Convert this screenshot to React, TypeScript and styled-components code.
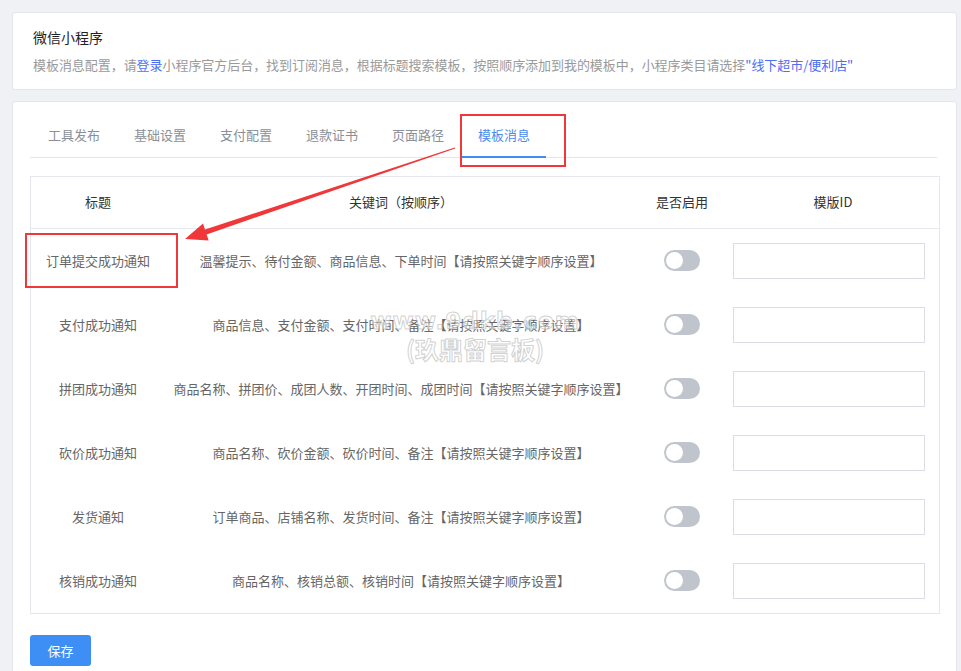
import React from 'react'
import styled, { createGlobalStyle } from 'styled-components'

const GlobalStyle = createGlobalStyle`
  html, body {
    margin: 0;
    padding: 0;
    background: #f0f1f5;
    font-family: "Noto Sans CJK SC", "Liberation Sans", sans-serif;
  }
  * { box-sizing: border-box; }
`

const tabs = ['工具发布', '基础设置', '支付配置', '退款证书', '页面路径', '模板消息']

const rows = [
  { title: '订单提交成功通知', keys: '温馨提示、待付金额、商品信息、下单时间' },
  { title: '支付成功通知', keys: '商品信息、支付金额、支付时间、备注' },
  { title: '拼团成功通知', keys: '商品名称、拼团价、成团人数、开团时间、成团时间' },
  { title: '砍价成功通知', keys: '商品名称、砍价金额、砍价时间、备注' },
  { title: '发货通知', keys: '订单商品、店铺名称、发货时间、备注' },
  { title: '核销成功通知', keys: '商品名称、核销总额、核销时间' },
]

export default function App() {
  return (
    <>
      <GlobalStyle />
      <Page>
        <Card>
          <CardTitle>微信小程序</CardTitle>
          <Hint>
            模板消息配置，请<HintLink>登录</HintLink>
            小程序官方后台，找到订阅消息，根据标题搜索模板，按照顺序添加到我的模板中，小程序类目请选择
            <HintLink>"线下超市/便利店"</HintLink>
          </Hint>
        </Card>

        <MainCard>
          <TabBar>
            {tabs.map((t, i) => (
              <Tab key={t} $active={i === tabs.length - 1}>
                {t}
              </Tab>
            ))}
          </TabBar>

          <Table>
            <HeadRow>
              <HeadCell>标题</HeadCell>
              <HeadCell>关键词（按顺序）</HeadCell>
              <HeadCell>是否启用</HeadCell>
              <HeadCell>模版ID</HeadCell>
            </HeadRow>
            {rows.map((r) => (
              <Row key={r.title}>
                <Cell>{r.title}</Cell>
                <Cell>{r.keys}【请按照关键字顺序设置】</Cell>
                <Cell>
                  <Switch>
                    <Knob />
                  </Switch>
                </Cell>
                <InputCell>
                  <IdInput />
                </InputCell>
              </Row>
            ))}
          </Table>

          <SaveButton>保存</SaveButton>
        </MainCard>

        <RedBox style={{ left: 460, top: 114, width: 106, height: 53 }} />
        <RedBox style={{ left: 25, top: 233, width: 153, height: 55 }} />
        <Arrow width="961" height="671" viewBox="0 0 961 671">
          <polygon
            fill="#f0383a"
            points="455.2,148.5 454.8,147.5 205,229.6 203,223.5 185,239 208.7,240.5 206.6,234.4"
          />
        </Arrow>
        <Watermark>
          <WmLatin>www.9dkb.com</WmLatin>
          <WmCjk>(玖鼎留言板)</WmCjk>
        </Watermark>
      </Page>
    </>
  )
}

const Page = styled.div`
  position: relative;
  padding: 12px 4px 0 12px;
  min-height: 671px;
  overflow: hidden;
`

const Card = styled.div`
  background: #fff;
  border: 1px solid #e3e5ea;
  border-radius: 3px;
  padding: 14px 20px 14px 20px;
`

const CardTitle = styled.div`
  font-size: 14px;
  line-height: 20px;
  color: #1f2329;
`

const Hint = styled.div`
  margin-top: 8px;
  font-size: 13px;
  line-height: 20px;
  color: #9a9a9a;
  white-space: nowrap;
  letter-spacing: -0.05px;
`

const HintLink = styled.span`
  color: #4c6ef5;
`

const MainCard = styled.div`
  margin-top: 11px;
  background: #fff;
  border: 1px solid #e3e5ea;
  border-radius: 3px;
  padding: 11px 16px 40px 17px;
  height: 600px;
`

const TabBar = styled.div`
  display: flex;
  gap: 2px;
  height: 45px;
  padding-left: 2px;
  border-bottom: 1px solid #e4e7ed;
  margin-right: 3px;
`

const Tab = styled.div<{ $active?: boolean }>`
  position: relative;
  width: 84px;
  text-align: center;
  font-size: 13px;
  line-height: 44px;
  color: ${(p) => (p.$active ? '#4a8df0' : '#8a8f99')};
  &::after {
    content: '';
    display: ${(p) => (p.$active ? 'block' : 'none')};
    position: absolute;
    left: 0;
    right: 0;
    bottom: -1px;
    height: 2px;
    background: #3d8ef5;
  }
`

const Table = styled.div`
  margin-top: 18px;
  border: 1px solid #e4e7ed;
`

const cols = '134px 472px 90px 1fr'

const HeadRow = styled.div`
  display: grid;
  grid-template-columns: ${cols};
  height: 52px;
  border-bottom: 1px solid #e4e7ed;
  align-items: center;
  padding-bottom: 2px;
`

const HeadCell = styled.div`
  text-align: center;
  font-size: 13px;
  color: #333;
`

const Row = styled.div`
  display: grid;
  grid-template-columns: ${cols};
  height: 64px;
  align-items: center;
`

const Cell = styled.div`
  display: flex;
  justify-content: center;
  font-size: 13px;
  color: #666;
  white-space: nowrap;
  padding-bottom: 2px;
`

const InputCell = styled.div`
  padding-left: 6px;
  padding-bottom: 1px;
`

const Switch = styled.div`
  width: 36px;
  height: 21px;
  border-radius: 11px;
  background: #c0c4cc;
  padding: 2px;
`

const Knob = styled.div`
  width: 17px;
  height: 17px;
  border-radius: 50%;
  background: #fff;
`

const IdInput = styled.input`
  display: block;
  width: 192px;
  height: 36px;
  border: 1px solid #dcdce6;
  outline: none;
  background: #fff;
`

const SaveButton = styled.button`
  margin-top: 21px;
  width: 61px;
  height: 31px;
  border: none;
  border-radius: 3px;
  background: #3d8ff6;
  color: #fff;
  font-family: inherit;
  font-size: 13px;
`

const RedBox = styled.div`
  position: absolute;
  border: 2px solid #f0383a;
  pointer-events: none;
`

const Arrow = styled.svg`
  position: absolute;
  left: 0;
  top: 0;
  pointer-events: none;
`

const Watermark = styled.div`
  position: absolute;
  left: 375px;
  top: 307px;
  width: 200px;
  display: flex;
  flex-direction: column;
  align-items: center;
  font-weight: bold;
  color: rgba(255, 255, 255, 0.5);
  -webkit-text-stroke: 1px rgba(170, 170, 170, 0.55);
  pointer-events: none;
`

const WmLatin = styled.span`
  font-family: "DejaVu Sans", sans-serif;
  font-size: 23px;
  line-height: 28px;
  letter-spacing: 1px;
`

const WmCjk = styled.span`
  font-family: "Noto Sans CJK SC", sans-serif;
  font-size: 24px;
  line-height: 28px;
`
